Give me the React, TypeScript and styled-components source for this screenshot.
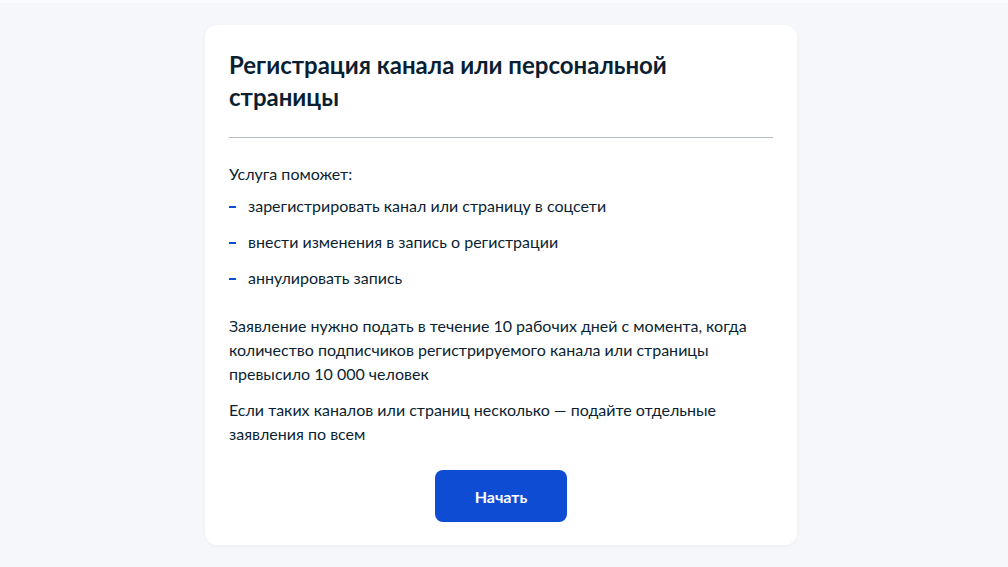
import React, { FC } from 'react';
import styled, { createGlobalStyle } from 'styled-components';

const GlobalStyle = createGlobalStyle`
  html, body {
    margin: 0;
    padding: 0;
    background: #f5f7fa;
    font-family: Lato, 'Open Sans', Arial, sans-serif;
    color: #0b1f33;
  }
  * {
    box-sizing: border-box;
  }
`;

const services = [
  'зарегистрировать канал или страницу в соцсети',
  'внести изменения в запись о регистрации',
  'аннулировать запись',
];

const App: FC = () => (
  <>
    <GlobalStyle />
    <Page>
      <TopStrip />
      <Main>
        <Card>
          <Title>Регистрация канала или персональной страницы</Title>
          <Divider />
          <Lead>Услуга поможет:</Lead>
          <List>
            {services.map(item => (
              <Item key={item}>{item}</Item>
            ))}
          </List>
          <Paragraph>
            Заявление нужно подать в течение 10 рабочих дней с момента, когда количество
            подписчиков регистрируемого канала или страницы превысило 10&nbsp;000 человек
          </Paragraph>
          <Paragraph>
            Если таких каналов или страниц несколько — подайте отдельные заявления по всем
          </Paragraph>
          <Actions>
            <Button type="button">Начать</Button>
          </Actions>
        </Card>
      </Main>
    </Page>
  </>
);

export default App;

const Page = styled.div`
  min-height: 567px;
  background: #f5f7fa;
`;

const TopStrip = styled.div`
  height: 3px;
  background: #fbfcfd;
`;

const Main = styled.main`
  display: flex;
  justify-content: center;
  padding: 22px 6px 0 0;
`;

const Card = styled.section`
  width: 592px;
  background: #ffffff;
  border-radius: 12px;
  box-shadow: 0 1px 4px rgba(11, 31, 51, 0.04);
  padding: 24px 24px 23px;
`;

const Title = styled.h1`
  margin: 0;
  font-size: 24px;
  line-height: 32px;
  font-weight: 700;
  color: #0b1f33;
  max-width: 460px;
`;

const Divider = styled.hr`
  margin: 24px 0;
  border: 0;
  height: 1px;
  background: #b2bac2;
`;

const Lead = styled.p`
  margin: 0;
  font-size: 16px;
  line-height: 24px;
`;

const List = styled.ul`
  list-style: none;
  margin: 8px 0 0;
  padding: 0;
  display: flex;
  flex-direction: column;
  gap: 12px;
`;

const Item = styled.li`
  position: relative;
  padding-left: 19px;
  font-size: 16px;
  line-height: 24px;

  &::before {
    content: '';
    position: absolute;
    left: 0;
    top: 12px;
    width: 7px;
    height: 2px;
    background: #0d4cd3;
  }
`;

const Paragraph = styled.p`
  margin: 24px 0 0;
  font-size: 16px;
  line-height: 24px;

  & + & {
    margin-top: 12px;
  }
`;

const Actions = styled.div`
  display: flex;
  justify-content: center;
  margin-top: 24px;
`;

const Button = styled.button`
  width: 132px;
  height: 52px;
  border: 0;
  border-radius: 8px;
  background: #0d4cd3;
  color: #ffffff;
  font-family: Lato, 'Open Sans', Arial, sans-serif;
  font-size: 16px;
  font-weight: 700;
  cursor: pointer;
`;
